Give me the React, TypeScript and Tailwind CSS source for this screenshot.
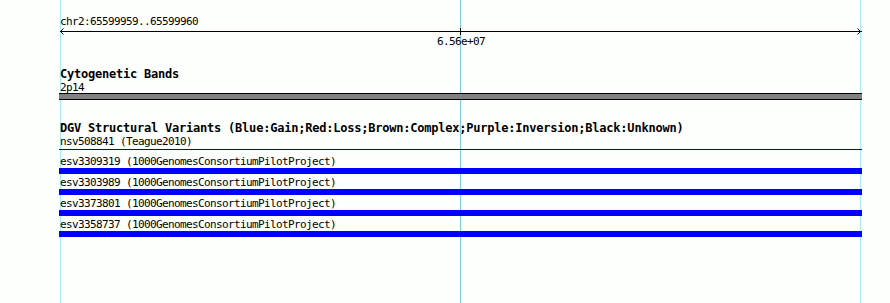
const mono = "font-['DejaVu_Sans_Mono','Liberation_Mono',monospace]"

const rows = ["esv3309319", "esv3303989", "esv3373801", "esv3358737"]

const Label = ({ children, bold = false, h = "h-[13px]" }: { children: React.ReactNode; bold?: boolean; h?: string }) => (
    <div
        className={
            bold
                ? `${h} pl-[1px] text-[12px] leading-[13px] font-bold tracking-[-0.22px] whitespace-nowrap text-black`
                : `${h} pl-[1px] text-[11px] leading-[13px] tracking-[-0.62px] whitespace-nowrap text-black`
        }
    >
        {children}
    </div>
)

const Ruler = () => (
    <div className="h-[7px]">
        <svg width="803" height="7" viewBox="0 0 803 7" shapeRendering="crispEdges">
            {/* main line */}
            <line x1="1" y1="3.5" x2="803" y2="3.5" stroke="#000" strokeWidth="1" />
            {/* arrow heads */}
            <path d="M4.5 0.5 L1.5 3.5 L4.5 6.5" fill="none" stroke="#000" strokeWidth="1" shapeRendering="auto" />
            <path d="M798.5 0.5 L801.5 3.5 L798.5 6.5" fill="none" stroke="#000" strokeWidth="1" shapeRendering="auto" />
            {/* tick */}
            <line x1="401.5" y1="0" x2="401.5" y2="7" stroke="#000" strokeWidth="1" />
        </svg>
    </div>
)

export default function App() {
    return (
        <div className={`relative w-[890px] h-[303px] overflow-hidden bg-[#fdfffd] ${mono}`}>
            {/* grid lines */}
            <div className="absolute top-0 bottom-0 left-[60px] w-px bg-[#a8eef2]" />
            <div className="absolute top-0 bottom-0 left-[460px] w-px bg-[#7fcbea]" />
            <div className="absolute top-0 bottom-0 left-[860px] w-px bg-[#a8eef2]" />

            <div className="relative ml-[59px] w-[803px] pt-[15px]">
                {/* overview ruler */}
                <Label>chr2:65599959..65599960</Label>
                <Ruler />
                <div className="h-[13px] flex justify-center">
                    <span className="text-[11px] leading-[13px] tracking-[-0.62px] pl-[1px] text-black">6.56e+07</span>
                </div>

                {/* cytobands */}
                <div className="mt-[20px]">
                    <Label bold>Cytogenetic Bands</Label>
                    <Label h="h-[12px]">2p14</Label>
                    <div className="h-[7px] border-y border-black bg-[#808080]" />
                </div>

                {/* DGV */}
                <div className="mt-[22px]">
                    <Label bold>DGV Structural Variants (Blue:Gain;Red:Loss;Brown:Complex;Purple:Inversion;Black:Unknown)</Label>
                    <Label h="h-[14px]">nsv508841 (Teague2010)</Label>
                    <div className="h-px bg-[#0000c0]" />
                    <div className="mt-[5px] flex flex-col gap-[2px]">
                        {rows.map((id) => (
                            <div key={id}>
                                <Label>{id} (1000GenomesConsortiumPilotProject)</Label>
                                <div className="h-[6px] bg-[#0000ff]" />
                            </div>
                        ))}
                    </div>
                </div>
            </div>
        </div>
    )
}
